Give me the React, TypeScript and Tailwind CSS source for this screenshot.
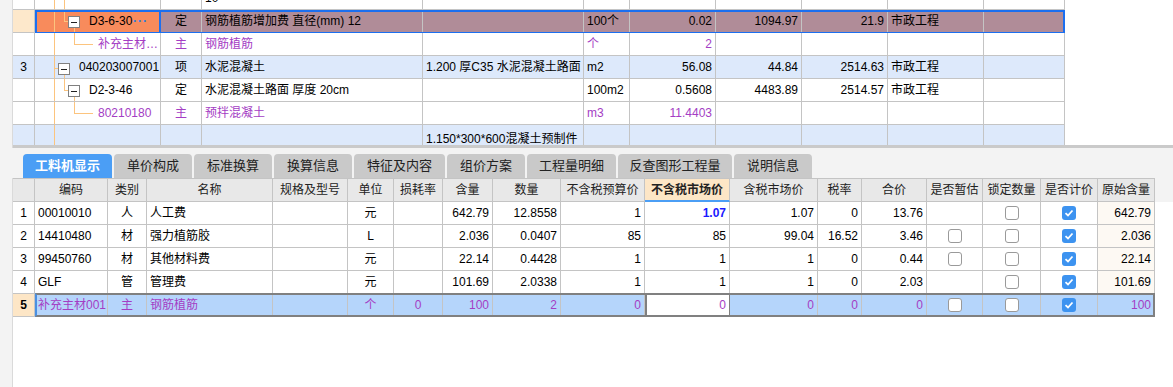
import React from 'react';

const TOP_COLS = 'grid w-[1052px] grid-cols-[22px_126px_41px_221px_161px_46px_86px_86px_86px_96px_81px]';
const BOT_COLS =
  'grid w-[1142px] grid-cols-[22px_73px_39px_126px_75px_46px_49px_50px_68px_84px_85px_88px_44px_65px_56px_58px_57px_57px]';
const LINE = '#fcc47e';
const cell = 'h-[23px] border-r border-b border-[#c4c4c4] px-[3px] leading-[22px] whitespace-nowrap overflow-hidden';

const TreeBox = ({ x, y }: { x: number; y: number }) => (
  <g>
    <rect x={x + 0.5} y={y + 0.5} width="11" height="11" fill="#fff" stroke="#808080" />
    <line x1={x + 3} y1={y + 6.5} x2={x + 9} y2={y + 6.5} stroke="#222" />
  </g>
);

const TreeLines = ({ kind }: { kind: string }) => (
  <svg width="126" height="23" className="absolute left-0 top-0" shapeRendering="crispEdges">
    <line x1="19.5" y1="0" x2="19.5" y2="23" stroke={LINE} />
    {kind === 'pass' && <line x1="29.5" y1="0" x2="29.5" y2="23" stroke={LINE} />}
    {kind === 'def' && (
      <>
        <line x1="29.5" y1="0" x2="29.5" y2="12" stroke={LINE} />
        <line x1="29" y1="11.5" x2="33" y2="11.5" stroke={LINE} />
        <line x1="39.5" y1="17" x2="39.5" y2="23" stroke={LINE} />
        <TreeBox x={33} y={6} />
      </>
    )}
    {kind === 'leaf' && (
      <>
        <line x1="39.5" y1="0" x2="39.5" y2="12" stroke={LINE} />
        <line x1="39" y1="11.5" x2="58" y2="11.5" stroke={LINE} />
      </>
    )}
    {kind === 'item' && (
      <>
        <line x1="19" y1="12.5" x2="23" y2="12.5" stroke={LINE} />
        <line x1="29.5" y1="18" x2="29.5" y2="23" stroke={LINE} />
        <TreeBox x={23} y={7} />
      </>
    )}
  </svg>
);

type TopRowProps = {
  bg: string;
  hdrBg: string;
  num?: string;
  kind: string;
  codePad: string;
  code: string;
  treeBg?: string;
  purple?: boolean;
  type?: string;
  name?: string;
  spec?: string;
  specWrap?: boolean;
  unit?: string;
  qty?: string;
  price?: string;
  total?: string;
  cat?: string;
  selected?: boolean;
  first?: boolean;
};

const TopRow = (p: TopRowProps) => {
  const txt = p.purple ? 'text-[#a43dc4]' : 'text-black';
  return (
    <div className={`${TOP_COLS} relative ${p.first ? '-mt-[13px]' : ''} ${p.bg} ${txt}`}>
      <div className={`${cell} text-center text-black ${p.hdrBg}`}>{p.num}</div>
      <div className={`${cell} relative ${p.treeBg ?? ''} ${p.selected ? 'border-r-2 border-r-[#1b6ff0]' : ''}`}>
        <TreeLines kind={p.kind} />
        <div className={`relative flex justify-between pr-[8px] ${p.codePad}`}>
          <span>{p.code}</span>
          {p.selected && <span className="font-bold tracking-[1px] text-[#2a7de1]">···</span>}
        </div>
      </div>
      <div className={`${cell} text-center`}>{p.type}</div>
      <div className={`${cell}`}>{p.name}</div>
      <div className={`${cell} ${p.specWrap ? 'whitespace-normal break-all pt-[3px] leading-[15px]' : ''}`}>{p.spec}</div>
      <div className={`${cell}`}>{p.unit}</div>
      <div className={`${cell} text-right`}>{p.qty}</div>
      <div className={`${cell} text-right`}>{p.price}</div>
      <div className={`${cell} text-right`}>{p.total}</div>
      <div className={`${cell}`}>{p.cat}</div>
      <div className={`${cell}`}></div>
      {p.selected && (
        <div className="pointer-events-none absolute left-[22px] right-0 top-0 bottom-[-1px] border-2 border-[#1b6ff0]" />
      )}
    </div>
  );
};

const Check = ({ on }: { on: boolean }) =>
  on ? (
    <span className="inline-flex h-[14px] w-[14px] items-center justify-center rounded-[3px] bg-[#3d93f0]">
      <svg width="10" height="10" viewBox="0 0 10 10">
        <polyline points="1.5,5.2 4,7.5 8.5,2.5" fill="none" stroke="#fff" strokeWidth="1.8" />
      </svg>
    </span>
  ) : (
    <span className="inline-block h-[14px] w-[14px] rounded-[3px] border border-[#9a9a9a] bg-white" />
  );

type BotRow = {
  n: string;
  code: string;
  kind: string;
  name: string;
  unit: string;
  loss: string;
  qty: string;
  amt: string;
  budget: string;
  market: string;
  taxm: string;
  rate: string;
  total: string;
  est: boolean | null;
  orig: string;
};

const ROWS: BotRow[] = [
  { n: '1', code: '00010010', kind: '人', name: '人工费', unit: '元', loss: '', qty: '642.79', amt: '12.8558', budget: '1', market: '1.07', taxm: '1.07', rate: '0', total: '13.76', est: null, orig: '642.79' },
  { n: '2', code: '14410480', kind: '材', name: '强力植筋胶', unit: 'L', loss: '', qty: '2.036', amt: '0.0407', budget: '85', market: '85', taxm: '99.04', rate: '16.52', total: '3.46', est: false, orig: '2.036' },
  { n: '3', code: '99450760', kind: '材', name: '其他材料费', unit: '元', loss: '', qty: '22.14', amt: '0.4428', budget: '1', market: '1', taxm: '1', rate: '0', total: '0.44', est: false, orig: '22.14' },
  { n: '4', code: 'GLF', kind: '管', name: '管理费', unit: '元', loss: '', qty: '101.69', amt: '2.0338', budget: '1', market: '1', taxm: '1', rate: '0', total: '2.03', est: null, orig: '101.69' },
];

const HEADERS = ['', '编码', '类别', '名称', '规格及型号', '单位', '损耗率', '含量', '数量', '不含税预算价', '不含税市场价', '含税市场价', '税率', '合价', '是否暂估', '锁定数量', '是否计价', '原始含量'];

const TABS = [
  { label: '工料机显示', w: 'w-[89px]', active: true },
  { label: '单价构成', w: 'w-[78px]' },
  { label: '标准换算', w: 'w-[78px]' },
  { label: '换算信息', w: 'w-[78px]' },
  { label: '特征及内容', w: 'w-[91px]' },
  { label: '组价方案', w: 'w-[78px]' },
  { label: '工程量明细', w: 'w-[89px]' },
  { label: '反查图形工程量', w: 'w-[114px]' },
  { label: '说明信息', w: 'w-[78px]' },
];

const bcell = 'h-[23px] border-r border-b border-[#c4c4c4] px-[3px] leading-[22px] whitespace-nowrap overflow-hidden';

export default function App() {
  return (
    <div className="flex h-[387px] w-[1173px] overflow-hidden bg-white font-['Liberation_Sans','Noto_Sans_CJK_SC',sans-serif] text-[12px]">
      <div className="w-[13px] shrink-0 border-r border-[#dadada] bg-[#f3f3f3]" />
      <div className="flex min-w-0 flex-1 flex-col">
        {/* upper grid */}
        <div className="h-[145px] overflow-hidden">
          <TopRow first bg="bg-white" hdrBg="bg-white" kind="pass" codePad="pl-[51px]" code="" name="10" />
          <TopRow
            selected
            bg="bg-[#b08c98]"
            hdrBg="bg-[#fde8cb]"
            treeBg="bg-[#f88b5c]"
            kind="def"
            codePad="pl-[51px]"
            code="D3-6-30"
            type="定"
            name="钢筋植筋增加费 直径(mm) 12"
            unit="100个"
            qty="0.02"
            price="1094.97"
            total="21.9"
            cat="市政工程"
          />
          <TopRow purple bg="bg-white" hdrBg="bg-white" kind="leaf" codePad="pl-[60px]" code="补充主材…" type="主" name="钢筋植筋" unit="个" qty="2" />
          <TopRow
            bg="bg-[#dde9fb]"
            hdrBg="bg-[#dde9fb]"
            num="3"
            kind="item"
            codePad="pl-[41px]"
            code="040203007001"
            type="项"
            name="水泥混凝土"
            spec="1.200 厚C35 水泥混凝土路面"
            unit="m2"
            qty="56.08"
            price="44.84"
            total="2514.63"
            cat="市政工程"
          />
          <TopRow
            bg="bg-white"
            hdrBg="bg-white"
            kind="def"
            codePad="pl-[51px]"
            code="D2-3-46"
            type="定"
            name="水泥混凝土路面 厚度 20cm"
            unit="100m2"
            qty="0.5608"
            price="4483.89"
            total="2514.57"
            cat="市政工程"
          />
          <TopRow purple bg="bg-white" hdrBg="bg-white" kind="leaf" codePad="pl-[60px]" code="80210180" type="主" name="预拌混凝土" unit="m3" qty="11.4403" />
          <TopRow
            bg="bg-[#dde9fb]"
            hdrBg="bg-[#dde9fb]"
            kind="none"
            codePad="pl-[51px]"
            code=""
            specWrap
            spec="1.150*300*600混凝土预制件"
          />
        </div>
        <div className="h-[3px] bg-[#cacaca]" />

        {/* tabs */}
        <div className="-ml-[13px] flex h-[30px] items-end gap-[2px] bg-[#f3f3f3] pl-[23px]">
          {TABS.map((t) => (
            <div
              key={t.label}
              className={`flex h-[24px] items-center justify-center rounded-t-[4px] text-[13px] ${t.w} ${
                t.active ? 'bg-[#4b9ef5] font-bold text-white' : 'bg-[#c9c9c9] text-[#222]'
              }`}
            >
              {t.label}
            </div>
          ))}
        </div>

        {/* lower table */}
        <div className="flex bg-[#f3f3f3]">
          <div className={`${BOT_COLS} border-t border-[#c4c4c4] bg-[#e8e8e8] text-[#222]`}>
            {HEADERS.map((h, i) => (
              <div
                key={i}
                className={`h-[23px] overflow-hidden whitespace-nowrap border-r border-b border-[#c4c4c4] text-center leading-[22px] ${
                  h === '不含税市场价' ? 'border-b-2 border-b-[#4b9ef5] bg-[#fde6c6] font-bold' : ''
                }`}
              >
                {h}
              </div>
            ))}
          </div>
        </div>
        <div className="flex-1 bg-white">
          {ROWS.map((r) => (
            <div key={r.n} className={`${BOT_COLS} text-black`}>
              <div className={`${bcell} text-center`}>{r.n}</div>
              <div className={bcell}>{r.code}</div>
              <div className={`${bcell} text-center`}>{r.kind}</div>
              <div className={bcell}>{r.name}</div>
              <div className={bcell}></div>
              <div className={`${bcell} text-center`}>{r.unit}</div>
              <div className={`${bcell} text-center`}>{r.loss}</div>
              <div className={`${bcell} text-right`}>{r.qty}</div>
              <div className={`${bcell} text-right`}>{r.amt}</div>
              <div className={`${bcell} text-right`}>{r.budget}</div>
              <div className={`${bcell} text-right ${r.n === '1' ? 'font-bold text-[#1a1aff]' : ''}`}>{r.market}</div>
              <div className={`${bcell} text-right`}>{r.taxm}</div>
              <div className={`${bcell} text-right`}>{r.rate}</div>
              <div className={`${bcell} text-right`}>{r.total}</div>
              <div className={`${bcell} flex items-center justify-center`}>{r.est !== null && <Check on={r.est} />}</div>
              <div className={`${bcell} flex items-center justify-center`}>
                <Check on={false} />
              </div>
              <div className={`${bcell} flex items-center justify-center`}>
                <Check on />
              </div>
              <div className={`${bcell} bg-[#fdf9f3] text-right`}>{r.orig}</div>
            </div>
          ))}
          {/* selected row */}
          <div className={`${BOT_COLS} relative bg-[#b5d5fb] text-[#a43dc4]`}>
            <div className={`${bcell} bg-[#fde6c6] text-center font-bold text-black`}>5</div>
            <div className={bcell}>补充主材001</div>
            <div className={`${bcell} text-center`}>主</div>
            <div className={bcell}>钢筋植筋</div>
            <div className={bcell}></div>
            <div className={`${bcell} text-center`}>个</div>
            <div className={`${bcell} text-center`}>0</div>
            <div className={`${bcell} text-right`}>100</div>
            <div className={`${bcell} text-right`}>2</div>
            <div className={`${bcell} text-right`}>0</div>
            <div className={`${bcell} border-x-2 border-x-[#808080] bg-white text-right`}>0</div>
            <div className={`${bcell} text-right`}>0</div>
            <div className={`${bcell} text-right`}>0</div>
            <div className={`${bcell} text-right`}>0</div>
            <div className={`${bcell} flex items-center justify-center`}>
              <Check on={false} />
            </div>
            <div className={`${bcell} flex items-center justify-center`}>
              <Check on={false} />
            </div>
            <div className={`${bcell} flex items-center justify-center`}>
              <Check on />
            </div>
            <div className={`${bcell} text-right`}>100</div>
            <div className="pointer-events-none absolute left-[22px] right-0 top-[-1px] bottom-0 border-2 border-[#808080] border-l-[#4a90e2]" />
          </div>
        </div>
      </div>
    </div>
  );
}
